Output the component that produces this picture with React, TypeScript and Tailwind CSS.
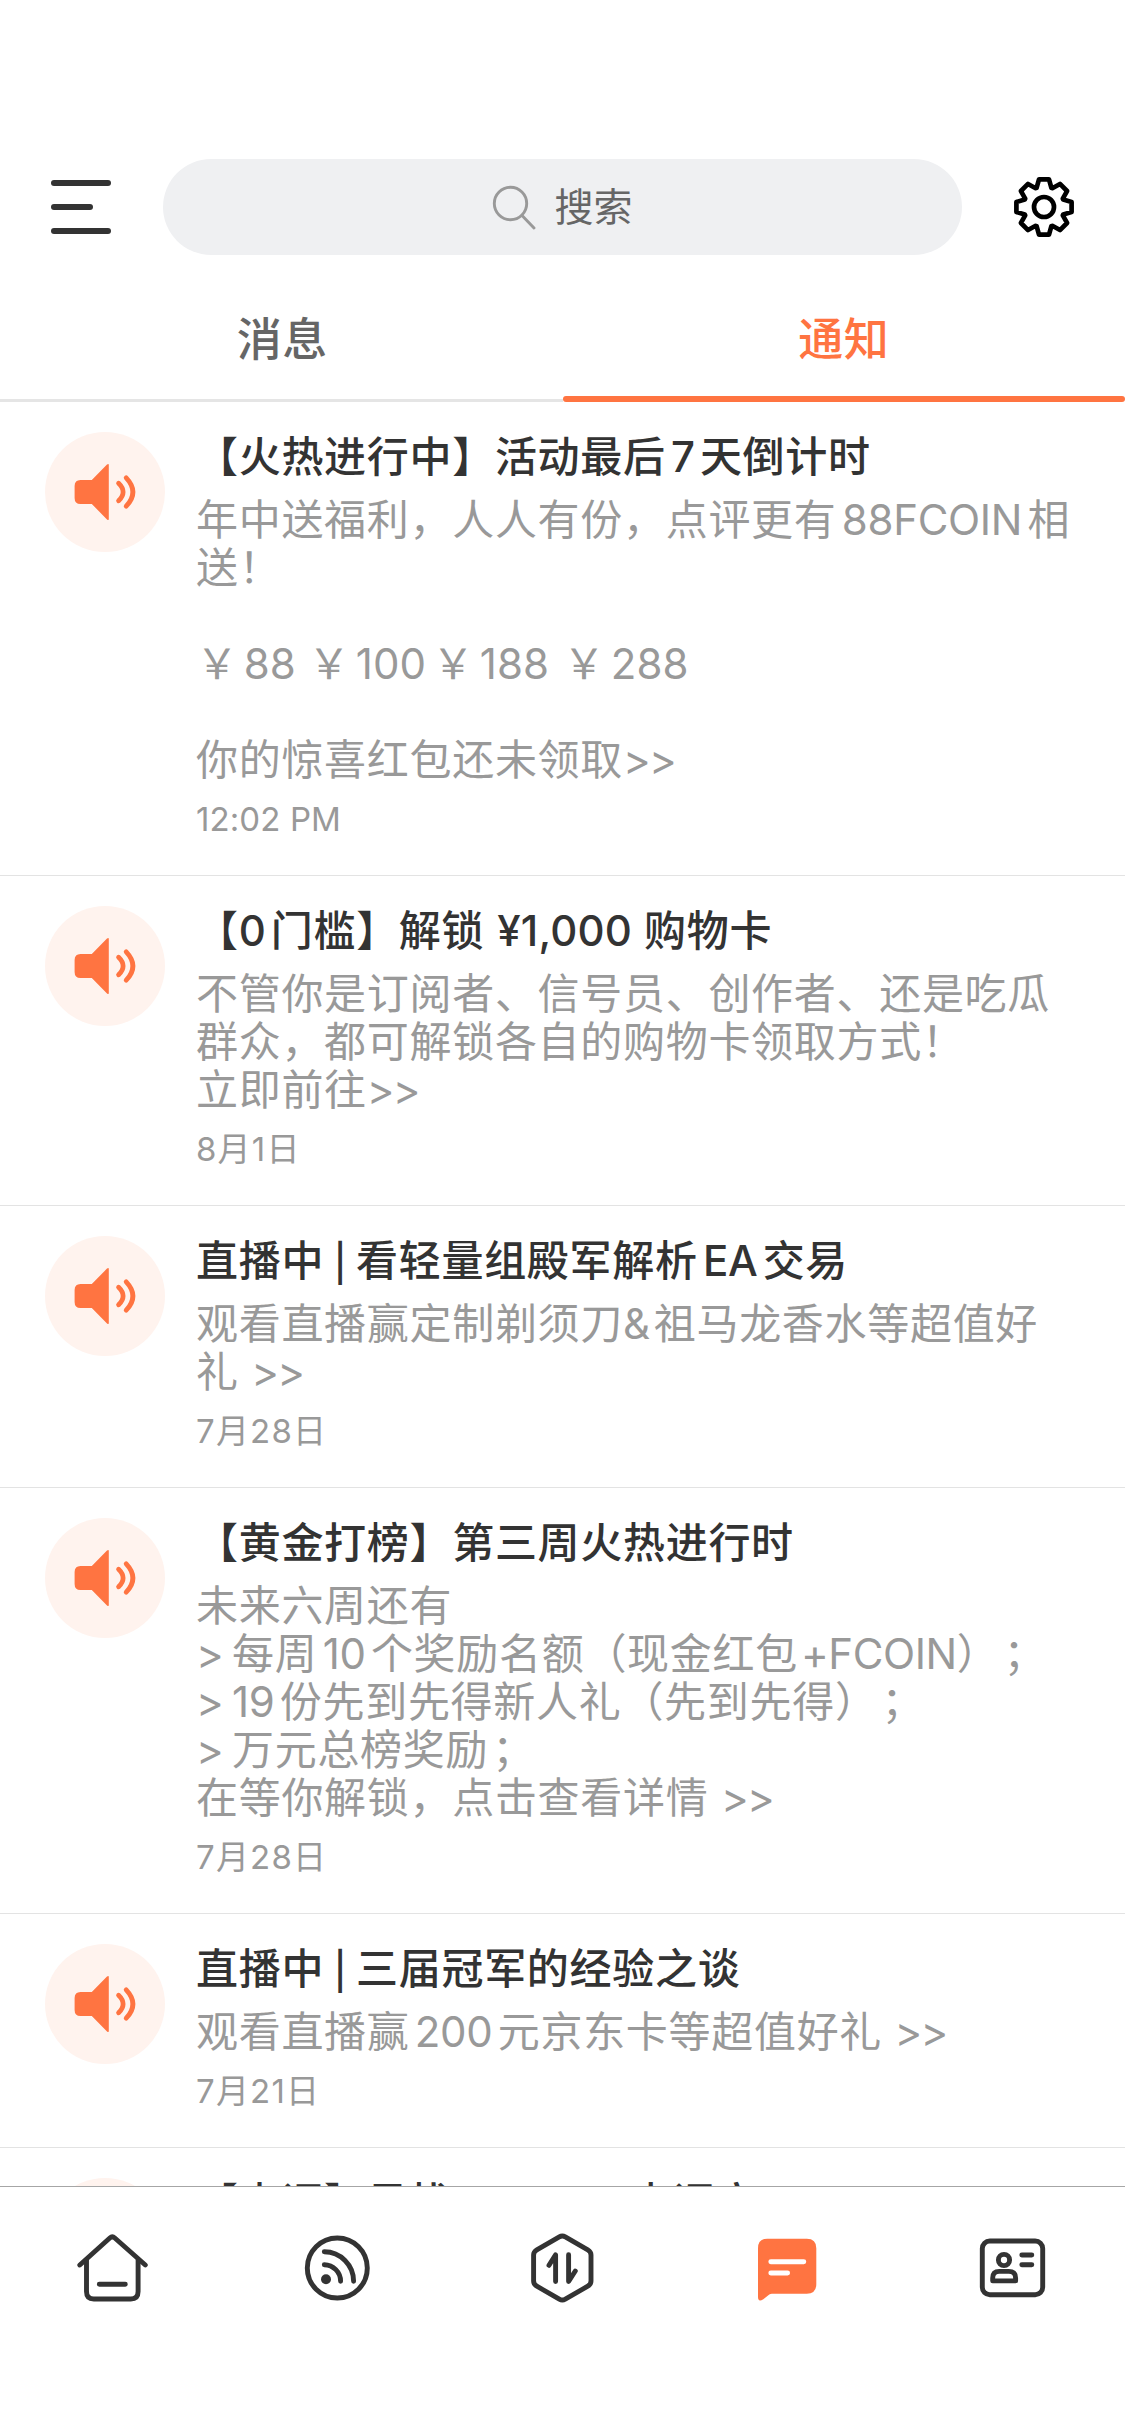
import React from 'react';

interface Notice {
  title: string;
  lines: string[];
  time: string;
}

const notices: Notice[] = [
  {
    title: '【火热进行中】活动最后7天倒计时',
    lines: ['年中送福利，人人有份，点评更有88FCOIN相', '送！', '', '￥ 88 ￥ 100 ￥ 188 ￥ 288', '', '你的惊喜红包还未领取>>'],
    time: '12:02 PM',
  },
  {
    title: '【0门槛】解锁 ¥1,000 购物卡',
    lines: ['不管你是订阅者、信号员、创作者、还是吃瓜', '群众，都可解锁各自的购物卡领取方式！', '立即前往>>'],
    time: '8月1日',
  },
  {
    title: '直播中 | 看轻量组殿军解析EA交易',
    lines: ['观看直播赢定制剃须刀&祖马龙香水等超值好', '礼 >>'],
    time: '7月28日',
  },
  {
    title: '【黄金打榜】第三周火热进行时',
    lines: [
      '未来六周还有',
      '> 每周10个奖励名额（现金红包+FCOIN）；',
      '> 19份先到先得新人礼（先到先得）；',
      '> 万元总榜奖励；',
      '在等你解锁，点击查看详情 >>',
    ],
    time: '7月28日',
  },
  {
    title: '直播中 | 三届冠军的经验之谈',
    lines: ['观看直播赢200元京东卡等超值好礼 >>'],
    time: '7月21日',
  },
  {
    title: '【点评】寻找 Richmill 点评官',
    lines: [],
    time: '',
  },
];

// One tooth of the gear, pointing up, repeated every 45 degrees
const tooth = [
  [-7.4, -19.2],
  [-5, -27.6],
  [5, -27.6],
  [7.4, -19.2],
];

const gearPoints = Array.from({ length: 8 }, (_, i) => {
  const a = (i * Math.PI) / 4;
  return tooth.map(([x, y]) => {
    const px = 30 + x * Math.cos(a) - y * Math.sin(a);
    const py = 30 + x * Math.sin(a) + y * Math.cos(a);
    return `${px.toFixed(2)},${py.toFixed(2)}`;
  });
})
  .flat()
  .join(' ');

const GearIcon = () => (
  <svg className="w-[60px] h-[60px]" viewBox="0 0 60 60" fill="none" stroke="#000" strokeWidth="4.7" strokeLinejoin="round">
    <polygon points={gearPoints} />
    <circle cx="30" cy="30" r="10" />
  </svg>
);

const SearchIcon = () => (
  <svg className="w-[45px] h-[45px]" viewBox="0 0 45 45" fill="none" stroke="#999" strokeWidth="2.9" strokeLinecap="round">
    <circle cx="18.5" cy="18.5" r="16.2" />
    <path d="M30.5 31 42 43" />
  </svg>
);

const SpeakerIcon = () => (
  <svg className="shrink-0 w-[120px] h-[120px] rounded-full bg-[#fff3ee]" viewBox="0 0 120 120" fill="none">
    <path d="M35.5 48H46.8L62 32.6Q63.8 31 63.8 33V87Q63.8 89 62 87.4L46.8 72H35.5Q29.6 72 29.6 66V54Q29.6 48 35.5 48Z" fill="#ff7441" />
    <path d="M73.6 51.2Q82.6 60 73.6 68.8M81.2 45.8Q94.6 60 81.2 74.2" stroke="#ff7441" strokeWidth="4.8" strokeLinecap="round" />
  </svg>
);

// Latin runs, arrows and dividers are set a little tighter than the Chinese text
const MixedText = ({ text }: { text: string }) => (
  <>
    {text.split(/(>+ ?| \| |&|；|[A-Za-z0-9¥,+]+)/).map((part, i) => {
      if (i % 2 === 0) return part;
      if (part.startsWith('>')) return <span key={i} className="tracking-[-1.8px]">{part}</span>;
      if (part === ' | ') return <span key={i} className="text-[37px] tracking-[-0.2px]">{part}</span>;
      if (part === '&') return <span key={i} className="pr-[3px] [text-autospace:no-autospace]">{part}</span>;
      if (part === '；') return <span key={i} className="pl-1">{part}</span>;
      if (part.startsWith('+')) return <span key={i} className="pl-[3px] tracking-[-0.4px]">{part}</span>;
      if (part.startsWith('¥')) return <span key={i} className="pl-px tracking-[0.2px]">{part}</span>;
      return <span key={i} className="tracking-[-0.3px]">{part}</span>;
    })}
  </>
);

const priceWidths = ['w-[112px]', 'w-[124px]', 'w-[131px]', 'w-[131px]'];

const PriceLine = ({ text }: { text: string }) => (
  <span className="flex">
    {text.split('￥').slice(1).map((price, i) => (
      <span key={i} className={`tracking-[-6px] ${priceWidths[i]}`}>
        ￥<span className="tracking-normal">{price.trimEnd()}</span>
      </span>
    ))}
  </span>
);

const Header = () => (
  <header className="flex items-center h-24 mt-[159px] px-[51px]">
    <div className="flex flex-col gap-[18px] w-[60px]">
      <span className="h-1.5 w-[60px] rounded-full bg-[#333]" />
      <span className="h-1.5 w-[42px] rounded-full bg-[#333]" />
      <span className="h-1.5 w-[60px] rounded-full bg-[#333]" />
    </div>
    <div className="flex items-center justify-center gap-[17px] ml-[52px] w-[799px] h-24 rounded-full bg-[#eff0f2]">
      <SearchIcon />
      <span className="text-[39px] text-[#666]">搜索</span>
    </div>
    <div className="ml-auto">
      <GearIcon />
    </div>
  </header>
);

const Tabs = () => (
  <div className="flex h-[147px] text-[45px] font-medium tracking-[0.6px]">
    <div className="flex w-1/2 items-center justify-center pt-[25px] pl-0.5 border-b-[3px] border-[#e5e5e5] text-[#666]">消息</div>
    <div className="flex w-1/2 flex-col text-[#ff7441]">
      <div className="flex flex-1 items-center justify-center pt-7">通知</div>
      <div className="h-1.5 rounded-full bg-[#ff7441]" />
    </div>
  </div>
);

const NoticeRow = ({ notice }: { notice: Notice }) => (
  <li className="flex gap-[31px] pt-[30px] pb-9 pl-[45px] border-b border-[#e3e3e3]">
    <SpeakerIcon />
    <div className="pt-px whitespace-pre text-[42px] leading-[48px] tracking-[0.7px]">
      <h3 className="h-12 font-medium text-[#333]">
        <MixedText text={notice.title} />
      </h3>
      <div className="mt-[15px] text-[#999]">
        {notice.lines.map((line, i) => (
          <p key={i} className="h-12">
            {line.startsWith('￥') ? <PriceLine text={line} /> : <MixedText text={line} />}
          </p>
        ))}
      </div>
      <p
        className={`mt-[15px] h-10 text-[33px] leading-10 text-[#999] [text-autospace:no-autospace] ${
          notice.time.endsWith('M') ? 'tracking-[0.1px]' : 'tracking-[1.2px]'
        }`}
      >
        {notice.time}
      </p>
    </div>
  </li>
);

const navIcons = [
  // home
  <g key="home">
    <path d="M3 33 33 6Q35.5 3.8 38 6L68.5 33" />
    <path d="M9.7 28V59.5Q9.7 67 17 67H54Q61.3 67 61.3 59.5V28M22.5 52.3H48.5" />
  </g>,
  // feed
  <g key="feed">
    <circle cx="35.5" cy="36" r="30" />
    <path d="M22.5 32.7A16.5 16.5 0 0 1 38.8 49.2M22.5 19.7A29.5 29.5 0 0 1 51.8 49.2" />
    <circle cx="24.2" cy="47.3" r="5" fill="#333" stroke="none" />
  </g>,
  // trade
  <g key="trade">
    <path d="M32.5 4.8Q35.5 3 38.5 4.8L61 17.8Q64.2 19.7 64.2 23V49Q64.2 52.3 61 54.2L38.5 67.2Q35.5 69 32.5 67.2L10 54.2Q6.8 52.3 6.8 49V23Q6.8 19.7 10 17.8Z" />
    <path d="M22.2 33.3 28.8 22.8V49.5M41.8 22.8V49.5L48.5 39" />
  </g>,
  // messages
  <g key="messages">
    <path d="M15.5 6.7H55Q64.5 6.7 64.5 16.2V52.2Q64.5 61.7 55 61.7H20Q18.6 61.7 17.5 62.6L11.5 67.2Q6.2 70.5 6.2 65V16.2Q6.2 6.7 15.5 6.7Z" fill="#ff7441" stroke="none" />
    <path d="M19 29.7H52M19 41H35.8" stroke="#fff" />
  </g>,
  // profile
  <g key="profile">
    <rect x="5.5" y="9" width="60.4" height="53.7" rx="7.5" />
    <circle cx="27.2" cy="28" r="5.6" />
    <path d="M15.9 48.9V46Q15.9 39.4 22.5 39.4H32Q38.8 39.4 38.8 46V48.9ZM45 23H55M45 32.7H55" />
  </g>,
];

const BottomNav = () => (
  <nav className="flex shrink-0 h-[250px] pt-[45px] border-t border-[#a6a6a6] bg-white">
    {navIcons.map((icon, i) => (
      <div key={i} className="flex flex-1 justify-center">
        <svg className="w-[72px] h-[72px]" viewBox="0.2 0 72 72" fill="none" stroke="#333" strokeWidth="4.9" strokeLinecap="round" strokeLinejoin="round">
          {icon}
        </svg>
      </div>
    ))}
  </nav>
);

export default function App() {
  return (
    <div
      lang="zh-CN"
      className="flex flex-col w-[1125px] h-[2436px] overflow-hidden bg-white font-['Inter','Noto_Sans_CJK_SC',sans-serif] [text-autospace:normal] [text-spacing-trim:space-all]"
    >
      <Header />
      <Tabs />
      <ul className="flex-1 min-h-0 overflow-hidden">
        {notices.map((notice, i) => (
          <NoticeRow key={i} notice={notice} />
        ))}
      </ul>
      <BottomNav />
    </div>
  );
}
